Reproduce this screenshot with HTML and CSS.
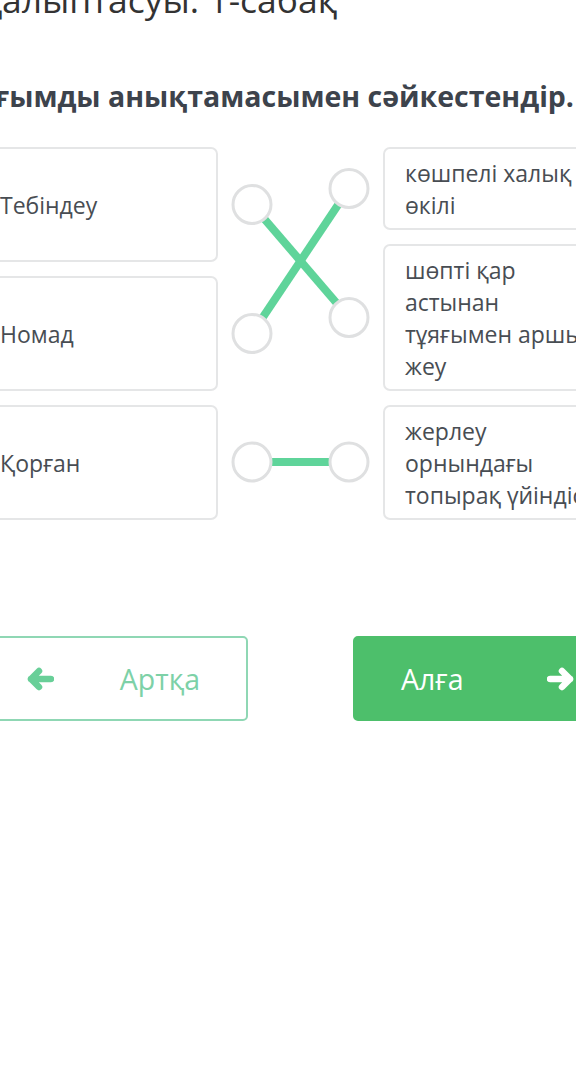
FILE: index.html
```html
<!DOCTYPE html>
<html lang="kk">
<head>
<meta charset="utf-8">
<title>Сәйкестендір</title>
<link rel="stylesheet" href="styles.css">
</head>
<body>
<main class="page">
  <h1 class="title"><span>Мал шаруашылығының қалыптасуы. 1-сабақ</span></h1>
  <p class="task"><span>Ұғымды анықтамасымен сәйкестендір.</span></p>

  <section class="match">
    <div class="col col-left">
      <div class="card card-left">Тебіндеу</div>
      <div class="card card-left">Номад</div>
      <div class="card card-left">Қорған</div>
    </div>
    <svg class="links" width="165" height="373" viewBox="0 0 165 373" aria-hidden="true">
      <g stroke="#5fd49a" stroke-width="8" fill="none">
        <line x1="34" y1="57.5" x2="131" y2="170.5"/>
        <line x1="34" y1="186.5" x2="131" y2="41.5"/>
        <line x1="34" y1="315" x2="131" y2="315"/>
      </g>
      <g fill="#fff" stroke="#dfe0e1" stroke-width="3">
        <circle cx="34" cy="57.5" r="19"/>
        <circle cx="34" cy="186.5" r="19"/>
        <circle cx="34" cy="315" r="19"/>
        <circle cx="131" cy="41.5" r="19"/>
        <circle cx="131" cy="170.5" r="19"/>
        <circle cx="131" cy="315" r="19"/>
      </g>
    </svg>
    <div class="col col-right">
      <div class="card card-right">көшпелі халық өкілі</div>
      <div class="card card-right">шөпті қар астынан тұяғымен аршып жеу</div>
      <div class="card card-right">жерлеу орнындағы топырақ үйіндісі</div>
    </div>
  </section>

  <nav class="actions">
    <button class="btn btn-back" type="button">
      <svg class="arrow" width="28" height="24" viewBox="0 0 28 24" aria-hidden="true">
        <g stroke="currentColor" stroke-width="6.5" stroke-linecap="round" stroke-linejoin="round" fill="none">
          <path d="M25 12H5M13 4L5 12L13 20"/>
        </g>
      </svg>
      <span>Артқа</span>
    </button>
    <button class="btn btn-next" type="button">
      <span>Алға</span>
      <svg class="arrow" width="28" height="24" viewBox="0 0 28 24" aria-hidden="true">
        <g stroke="currentColor" stroke-width="6.5" stroke-linecap="round" stroke-linejoin="round" fill="none">
          <path d="M3 12H23M15 4L23 12L15 20"/>
        </g>
      </svg>
    </button>
  </nav>
</main>
</body>
</html>
```
FILE: styles.css
```css
html, body {
  margin: 0;
  padding: 0;
  background: #fff;
}
body {
  width: 576px;
  height: 1070px;
  overflow: hidden;
  font-family: "Open Sans", "Noto Sans", sans-serif;
  color: #444;
}
.page {
  width: 645px;
  margin-left: -22px;
}
.title {
  display: flex;
  justify-content: flex-end;
  width: 359px;
  margin: -23px 0 0 0;
  font-size: 35.5px;
  font-weight: 400;
  line-height: 44px;
  color: #333;
  white-space: nowrap;
}
.task {
  display: flex;
  justify-content: flex-end;
  width: 596px;
  margin: 55px 0 0 0;
  font-size: 28.5px;
  font-weight: 700;
  line-height: 40px;
  color: #3d434c;
  white-space: nowrap;
}
.match {
  display: grid;
  grid-template-columns: 240px 165px 240px;
  margin-top: 31px;
}
.col {
  display: flex;
  flex-direction: column;
  gap: 14px;
}
.card {
  box-sizing: border-box;
  border: 2px solid #e5e6e7;
  border-radius: 7px;
  font-size: 23px;
  line-height: 32px;
  color: #484d53;
  background: #fff;
}
.card-left {
  flex: 1;
  display: flex;
  align-items: center;
  padding: 0 20px;
}
.card-right {
  padding: 7.5px 20px;
}
.links {
  display: block;
}
.actions {
  display: flex;
  justify-content: space-between;
  margin-top: 116px;
}
.btn {
  box-sizing: border-box;
  width: 270px;
  height: 85px;
  display: flex;
  align-items: center;
  justify-content: space-between;
  padding: 0 46px;
  border-radius: 5px;
  font-family: inherit;
  font-size: 28.5px;
  cursor: pointer;
}
.btn-back {
  background: #fff;
  border: 2px solid #8fd7b4;
  color: #7dd1a7;
}
.btn-back .arrow {
  color: #68cf98;
}
.btn-next {
  background: #4dbf6b;
  border: 2px solid #4dbf6b;
  color: #fff;
}
.arrow {
  display: block;
}
```
